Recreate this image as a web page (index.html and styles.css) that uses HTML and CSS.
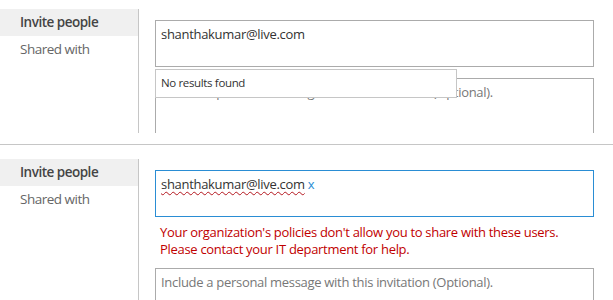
FILE: index.html
```html
<!DOCTYPE html>
<html>
    <head>
        <title>Share</title>
        <link rel="stylesheet" href="styles.css">
    </head>
    <body>
        <div class="panel first">
            <div class="nav">
                <div class="nav-item active">Invite people</div>
                <div class="nav-item">Shared with</div>
            </div>
            <div class="main">
                <div class="people-box">
                    <span class="typed">shanthakumar@live.com</span>
                </div>
                <div class="message-box gap-small">Include a personal message with this invitation (Optional).</div>
                <div class="dropdown">No results found</div>
            </div>
        </div>
        <div class="rule"></div>
        <div class="panel second">
            <div class="nav">
                <div class="nav-item active">Invite people</div>
                <div class="nav-item">Shared with</div>
            </div>
            <div class="main">
                <div class="people-box focused">
                    <span class="resolved">shanthakumar@live.com</span> <span class="remove">x</span>
                </div>
                <div class="error">Your organization's policies don't allow you to share with these users.<br>Please contact your IT department for help.</div>
                <div class="message-box">Include a personal message with this invitation (Optional).</div>
            </div>
        </div>
    </body>
</html>
```
FILE: styles.css
```css
body {
    margin: 0;
    width: 613px;
    height: 300px;
    overflow: hidden;
    background: #fff;
    font-family: "Open Sans", "Segoe UI", sans-serif;
    font-size: 13px;
    letter-spacing: -0.3px;
    color: #444;
}

.panel {
    display: flex;
    overflow: hidden;
}

.panel.first {
    padding-top: 9px;
    height: 124px;
}

.panel.second {
    padding-top: 14px;
    height: 141px;
}

.rule {
    margin-top: 11px;
    height: 1px;
    background: #c6c6c6;
}

.nav {
    width: 138px;
    flex-shrink: 0;
    border-right: 1px solid #c6c6c6;
}

.nav-item {
    height: 27px;
    line-height: 27px;
    padding-left: 20px;
    font-size: 13.5px;
    letter-spacing: -0.5px;
    color: #666;
}

.nav-item.active {
    background: #f0f0f0;
    font-weight: 600;
    color: #444;
}

.main {
    position: relative;
    flex: 1;
    padding: 11px 0 0 16px;
}

.people-box {
    width: 427px;
    height: 37px;
    border: 1px solid #ababab;
    padding: 4px 5px;
    line-height: 18px;
    color: #333;
}

.people-box.focused {
    border-color: #2a8dd4;
}

.resolved {
    text-decoration: underline wavy #b4161e;
    text-decoration-thickness: 1px;
    text-underline-offset: 2px;
}

.remove {
    color: #2a8dd4;
}

.message-box {
    width: 427px;
    height: 60px;
    border: 1px solid #ababab;
    padding: 4px 5px;
    line-height: 18px;
    color: #777;
}

.gap-small {
    margin-top: 11px;
}

.dropdown {
    position: absolute;
    left: 16px;
    top: 60px;
    width: 295px;
    height: 27px;
    line-height: 26px;
    padding-left: 5px;
    background: #fff;
    border: 1px solid #c6c6c6;
    color: #333;
    font-size: 11.5px;
    letter-spacing: -0.35px;
}

.error {
    padding: 7px 0 0 5px;
    height: 44px;
    line-height: 17px;
    color: #bf0000;
}
```
